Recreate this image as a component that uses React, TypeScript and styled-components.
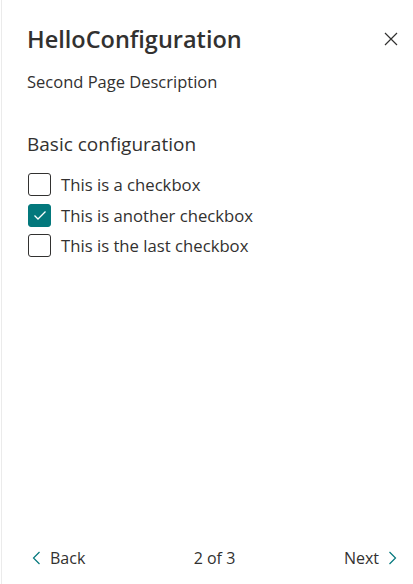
import React, { useState } from 'react';
import styled, { createGlobalStyle } from 'styled-components';

const GlobalStyle = createGlobalStyle`
  html, body {
    margin: 0;
    padding: 0;
    background: #ffffff;
  }
  body {
    font-family: 'Open Sans', 'Noto Sans', sans-serif;
    color: #323130;
  }
`;

const Panel = styled.div`
  box-sizing: border-box;
  height: 584px;
  margin-left: 1px;
  border-left: 1px solid #ebebeb;
  display: flex;
  flex-direction: column;
`;

const Header = styled.div`
  display: flex;
  align-items: center;
  justify-content: space-between;
  padding: 23px 14px 0 25px;
  height: 32px;
`;

const Title = styled.h1`
  margin: 0;
  font-size: 23.5px;
  font-weight: 600;
  line-height: 30px;
  color: #323130;
`;

const CloseButton = styled.button`
  border: 0;
  background: none;
  padding: 0;
  width: 16px;
  height: 16px;
  display: flex;
  align-items: center;
  justify-content: center;
  cursor: pointer;
`;

const Body = styled.div`
  flex: 1;
  padding: 0 26px;
`;

const Description = styled.p`
  margin: 16px 0 0 -1px;
  font-size: 16.5px;
  line-height: 22px;
`;

const GroupLabel = styled.div`
  margin: 38px 0 0 -1px;
  font-size: 19px;
  line-height: 26px;
`;

const List = styled.div`
  margin-top: 16px;
  display: flex;
  flex-direction: column;
  gap: 7.5px;
`;

const Row = styled.label`
  display: flex;
  align-items: center;
  gap: 10px;
  font-size: 16.7px;
  line-height: 23px;
  cursor: pointer;
`;

const Box = styled.span<{ $checked: boolean }>`
  box-sizing: border-box;
  width: 23px;
  height: 23px;
  border-radius: 3px;
  border: 1px solid ${({ $checked }) => ($checked ? '#03787c' : '#323130')};
  background: ${({ $checked }) => ($checked ? '#03787c' : '#ffffff')};
  display: flex;
  align-items: center;
  justify-content: center;
`;

const Footer = styled.div`
  display: grid;
  grid-template-columns: 1fr auto 1fr;
  align-items: center;
  padding: 0 16px 14px 30px;
  height: 24px;
  font-size: 16px;
`;

const NavButton = styled.button<{ $right?: boolean }>`
  justify-self: ${({ $right }) => ($right ? 'end' : 'start')};
  border: 0;
  background: none;
  padding: 0;
  font: inherit;
  color: #323130;
  display: flex;
  align-items: center;
  gap: 9px;
  cursor: pointer;
`;

const PageCount = styled.span`
  color: #323130;
`;

const Chevron: React.FC<{ dir: 'left' | 'right' }> = ({ dir }) => (
  <svg width="9" height="14" viewBox="0 0 9 14">
    <path
      d={dir === 'left' ? 'M7.5 1 L1.5 7 L7.5 13' : 'M1.5 1 L7.5 7 L1.5 13'}
      fill="none"
      stroke="#03787c"
      strokeWidth="1.2"
    />
  </svg>
);

const options = ['This is a checkbox', 'This is another checkbox', 'This is the last checkbox'];

export default function App() {
  const [checked, setChecked] = useState<boolean[]>([false, true, false]);

  const toggle = (i: number) => setChecked((c) => c.map((v, j) => (j === i ? !v : v)));

  return (
    <Panel>
      <GlobalStyle />
      <Header>
        <Title>HelloConfiguration</Title>
        <CloseButton aria-label="Close">
          <svg width="14" height="14" viewBox="0 0 14 14">
            <path d="M1 1 L13 13 M13 1 L1 13" stroke="#323130" strokeWidth="1.2" fill="none" />
          </svg>
        </CloseButton>
      </Header>
      <Body>
        <Description>Second Page Description</Description>
        <GroupLabel>Basic configuration</GroupLabel>
        <List>
          {options.map((label, i) => (
            <Row key={label} onClick={() => toggle(i)}>
              <Box $checked={checked[i]}>
                {checked[i] && (
                  <svg width="14" height="11" viewBox="0 0 14 11">
                    <path d="M1.5 5.5 L5 9 L12.5 1.5" stroke="#ffffff" strokeWidth="1.3" fill="none" />
                  </svg>
                )}
              </Box>
              {label}
            </Row>
          ))}
        </List>
      </Body>
      <Footer>
        <NavButton>
          <Chevron dir="left" />
          Back
        </NavButton>
        <PageCount>2 of 3</PageCount>
        <NavButton $right>
          Next
          <Chevron dir="right" />
        </NavButton>
      </Footer>
    </Panel>
  );
}
